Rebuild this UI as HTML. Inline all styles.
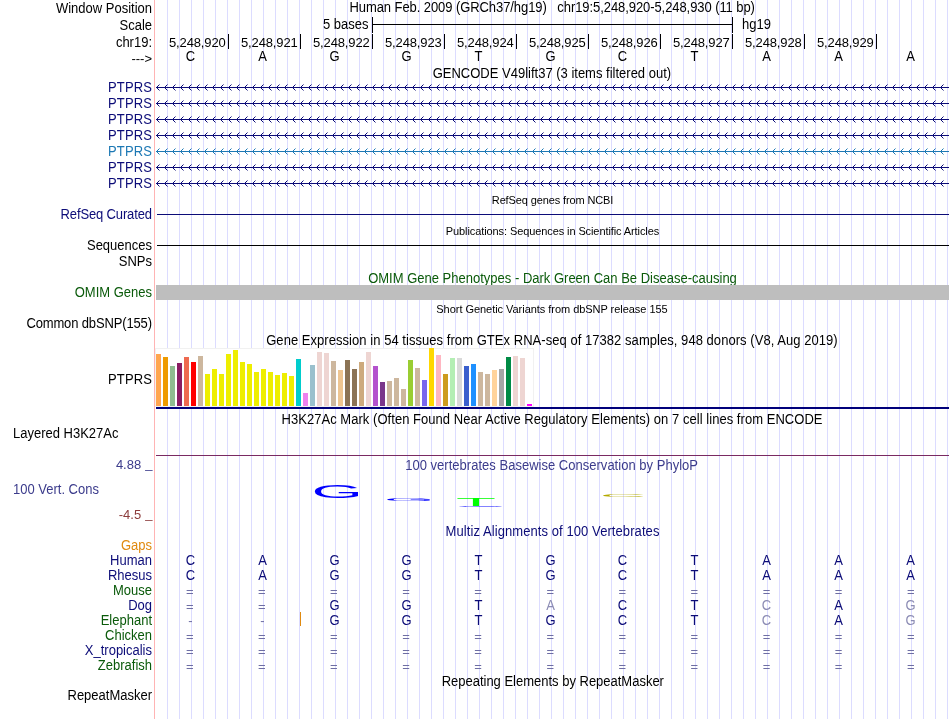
<!DOCTYPE html>
<html lang="en"><head><meta charset="utf-8"><title>UCSC Genome Browser chr19:5,248,920-5,248,930</title>
<style>html,body{margin:0;padding:0;background:#fff;overflow:hidden}svg{display:block;will-change:transform}text{font-family:"Liberation Sans",sans-serif;white-space:pre}</style>
</head><body>
<svg width="950" height="719" viewBox="0 0 950 719">
<rect width="950" height="719" fill="#fff"/>
<g id="guides" fill="#dcdcff">
<rect x="167" y="0" width="1" height="719"/>
<rect x="179" y="0" width="1" height="719"/>
<rect x="191" y="0" width="1" height="719"/>
<rect x="203" y="0" width="1" height="719"/>
<rect x="215" y="0" width="1" height="719"/>
<rect x="227" y="0" width="1" height="719"/>
<rect x="239" y="0" width="1" height="719"/>
<rect x="251" y="0" width="1" height="719"/>
<rect x="263" y="0" width="1" height="719"/>
<rect x="275" y="0" width="1" height="719"/>
<rect x="287" y="0" width="1" height="719"/>
<rect x="299" y="0" width="1" height="719"/>
<rect x="311" y="0" width="1" height="719"/>
<rect x="323" y="0" width="1" height="719"/>
<rect x="335" y="0" width="1" height="719"/>
<rect x="347" y="0" width="1" height="719"/>
<rect x="359" y="0" width="1" height="719"/>
<rect x="371" y="0" width="1" height="719"/>
<rect x="383" y="0" width="1" height="719"/>
<rect x="395" y="0" width="1" height="719"/>
<rect x="407" y="0" width="1" height="719"/>
<rect x="419" y="0" width="1" height="719"/>
<rect x="431" y="0" width="1" height="719"/>
<rect x="443" y="0" width="1" height="719"/>
<rect x="455" y="0" width="1" height="719"/>
<rect x="467" y="0" width="1" height="719"/>
<rect x="479" y="0" width="1" height="719"/>
<rect x="491" y="0" width="1" height="719"/>
<rect x="503" y="0" width="1" height="719"/>
<rect x="515" y="0" width="1" height="719"/>
<rect x="527" y="0" width="1" height="719"/>
<rect x="539" y="0" width="1" height="719"/>
<rect x="551" y="0" width="1" height="719"/>
<rect x="563" y="0" width="1" height="719"/>
<rect x="575" y="0" width="1" height="719"/>
<rect x="587" y="0" width="1" height="719"/>
<rect x="599" y="0" width="1" height="719"/>
<rect x="611" y="0" width="1" height="719"/>
<rect x="623" y="0" width="1" height="719"/>
<rect x="635" y="0" width="1" height="719"/>
<rect x="647" y="0" width="1" height="719"/>
<rect x="659" y="0" width="1" height="719"/>
<rect x="671" y="0" width="1" height="719"/>
<rect x="683" y="0" width="1" height="719"/>
<rect x="695" y="0" width="1" height="719"/>
<rect x="707" y="0" width="1" height="719"/>
<rect x="719" y="0" width="1" height="719"/>
<rect x="731" y="0" width="1" height="719"/>
<rect x="743" y="0" width="1" height="719"/>
<rect x="755" y="0" width="1" height="719"/>
<rect x="767" y="0" width="1" height="719"/>
<rect x="779" y="0" width="1" height="719"/>
<rect x="791" y="0" width="1" height="719"/>
<rect x="803" y="0" width="1" height="719"/>
<rect x="815" y="0" width="1" height="719"/>
<rect x="827" y="0" width="1" height="719"/>
<rect x="839" y="0" width="1" height="719"/>
<rect x="851" y="0" width="1" height="719"/>
<rect x="863" y="0" width="1" height="719"/>
<rect x="875" y="0" width="1" height="719"/>
<rect x="887" y="0" width="1" height="719"/>
<rect x="899" y="0" width="1" height="719"/>
<rect x="911" y="0" width="1" height="719"/>
<rect x="923" y="0" width="1" height="719"/>
<rect x="935" y="0" width="1" height="719"/>
<rect x="947" y="0" width="1" height="719"/>
</g>
<rect x="154" y="0" width="1" height="719" fill="#ffb4b4"/>
<text transform="translate(152 13) scale(0.9346 1)" text-anchor="end" fill="#000" font-size="13.91">Window Position</text>
<text transform="translate(152 30) scale(0.9346 1)" text-anchor="end" fill="#000" font-size="13.91">Scale</text>
<text transform="translate(152 47) scale(0.9346 1)" text-anchor="end" fill="#000" font-size="13.91">chr19:</text>
<text x="152" y="63" text-anchor="end" fill="#000" font-size="13">---&gt;</text>
<text transform="translate(552.2 12) scale(0.9346 1)" text-anchor="middle" fill="#000" font-size="13.91" textLength="433.89" lengthAdjust="spacing">Human Feb. 2009 (GRCh37/hg19)   chr19:5,248,920-5,248,930 (11 bp)</text>
<text transform="translate(368.5 29) scale(0.9346 1)" text-anchor="end" fill="#000" font-size="13.91">5 bases</text>
<text transform="translate(742 29) scale(0.9346 1)" text-anchor="start" fill="#000" font-size="13.91">hg19</text>
<g fill="#000">
<rect x="372" y="24" width="361" height="1"/>
<rect x="372" y="17" width="1" height="16"/>
<rect x="732" y="17" width="1" height="16"/>
</g>
<text x="225.7" y="47" text-anchor="end" fill="#000" font-size="13" textLength="56.7" lengthAdjust="spacing">5,248,920</text>
<rect x="228" y="34" width="1" height="15" fill="#000"/>
<text transform="translate(190.5 61) scale(0.9346 1)" text-anchor="middle" fill="#000" font-size="13.91">C</text>
<text x="297.7" y="47" text-anchor="end" fill="#000" font-size="13" textLength="56.7" lengthAdjust="spacing">5,248,921</text>
<rect x="300" y="34" width="1" height="15" fill="#000"/>
<text transform="translate(262.5 61) scale(0.9346 1)" text-anchor="middle" fill="#000" font-size="13.91">A</text>
<text x="369.7" y="47" text-anchor="end" fill="#000" font-size="13" textLength="56.7" lengthAdjust="spacing">5,248,922</text>
<rect x="372" y="34" width="1" height="15" fill="#000"/>
<text transform="translate(334.5 61) scale(0.9346 1)" text-anchor="middle" fill="#000" font-size="13.91">G</text>
<text x="441.7" y="47" text-anchor="end" fill="#000" font-size="13" textLength="56.7" lengthAdjust="spacing">5,248,923</text>
<rect x="444" y="34" width="1" height="15" fill="#000"/>
<text transform="translate(406.5 61) scale(0.9346 1)" text-anchor="middle" fill="#000" font-size="13.91">G</text>
<text x="513.7" y="47" text-anchor="end" fill="#000" font-size="13" textLength="56.7" lengthAdjust="spacing">5,248,924</text>
<rect x="516" y="34" width="1" height="15" fill="#000"/>
<text transform="translate(478.5 61) scale(0.9346 1)" text-anchor="middle" fill="#000" font-size="13.91">T</text>
<text x="585.7" y="47" text-anchor="end" fill="#000" font-size="13" textLength="56.7" lengthAdjust="spacing">5,248,925</text>
<rect x="588" y="34" width="1" height="15" fill="#000"/>
<text transform="translate(550.5 61) scale(0.9346 1)" text-anchor="middle" fill="#000" font-size="13.91">G</text>
<text x="657.7" y="47" text-anchor="end" fill="#000" font-size="13" textLength="56.7" lengthAdjust="spacing">5,248,926</text>
<rect x="660" y="34" width="1" height="15" fill="#000"/>
<text transform="translate(622.5 61) scale(0.9346 1)" text-anchor="middle" fill="#000" font-size="13.91">C</text>
<text x="729.7" y="47" text-anchor="end" fill="#000" font-size="13" textLength="56.7" lengthAdjust="spacing">5,248,927</text>
<rect x="732" y="34" width="1" height="15" fill="#000"/>
<text transform="translate(694.5 61) scale(0.9346 1)" text-anchor="middle" fill="#000" font-size="13.91">T</text>
<text x="801.7" y="47" text-anchor="end" fill="#000" font-size="13" textLength="56.7" lengthAdjust="spacing">5,248,928</text>
<rect x="804" y="34" width="1" height="15" fill="#000"/>
<text transform="translate(766.5 61) scale(0.9346 1)" text-anchor="middle" fill="#000" font-size="13.91">A</text>
<text x="873.7" y="47" text-anchor="end" fill="#000" font-size="13" textLength="56.7" lengthAdjust="spacing">5,248,929</text>
<rect x="876" y="34" width="1" height="15" fill="#000"/>
<text transform="translate(838.5 61) scale(0.9346 1)" text-anchor="middle" fill="#000" font-size="13.91">A</text>
<text transform="translate(910.5 61) scale(0.9346 1)" text-anchor="middle" fill="#000" font-size="13.91">A</text>
<text transform="translate(551.9 78) scale(0.9346 1)" text-anchor="middle" fill="#000" font-size="13.91" textLength="255.09" lengthAdjust="spacing">GENCODE V49lift37 (3 items filtered out)</text>
<text transform="translate(152 92) scale(0.9346 1)" text-anchor="end" fill="#0c0c78" font-size="13.91" textLength="47.19" lengthAdjust="spacing">PTPRS</text>
<g stroke="#0c0c78" fill="none" stroke-width="1">
<path d="M156 87.5H949"/>
<path d="M159.5 84.5L156.5 87.5L159.5 90.5M167.5 84.5L164.5 87.5L167.5 90.5M175.5 84.5L172.5 87.5L175.5 90.5M183.5 84.5L180.5 87.5L183.5 90.5M191.5 84.5L188.5 87.5L191.5 90.5M199.5 84.5L196.5 87.5L199.5 90.5M207.5 84.5L204.5 87.5L207.5 90.5M215.5 84.5L212.5 87.5L215.5 90.5M223.5 84.5L220.5 87.5L223.5 90.5M231.5 84.5L228.5 87.5L231.5 90.5M239.5 84.5L236.5 87.5L239.5 90.5M247.5 84.5L244.5 87.5L247.5 90.5M255.5 84.5L252.5 87.5L255.5 90.5M263.5 84.5L260.5 87.5L263.5 90.5M271.5 84.5L268.5 87.5L271.5 90.5M279.5 84.5L276.5 87.5L279.5 90.5M287.5 84.5L284.5 87.5L287.5 90.5M295.5 84.5L292.5 87.5L295.5 90.5M303.5 84.5L300.5 87.5L303.5 90.5M311.5 84.5L308.5 87.5L311.5 90.5M319.5 84.5L316.5 87.5L319.5 90.5M327.5 84.5L324.5 87.5L327.5 90.5M335.5 84.5L332.5 87.5L335.5 90.5M343.5 84.5L340.5 87.5L343.5 90.5M351.5 84.5L348.5 87.5L351.5 90.5M359.5 84.5L356.5 87.5L359.5 90.5M367.5 84.5L364.5 87.5L367.5 90.5M375.5 84.5L372.5 87.5L375.5 90.5M383.5 84.5L380.5 87.5L383.5 90.5M391.5 84.5L388.5 87.5L391.5 90.5M399.5 84.5L396.5 87.5L399.5 90.5M407.5 84.5L404.5 87.5L407.5 90.5M415.5 84.5L412.5 87.5L415.5 90.5M423.5 84.5L420.5 87.5L423.5 90.5M431.5 84.5L428.5 87.5L431.5 90.5M439.5 84.5L436.5 87.5L439.5 90.5M447.5 84.5L444.5 87.5L447.5 90.5M455.5 84.5L452.5 87.5L455.5 90.5M463.5 84.5L460.5 87.5L463.5 90.5M471.5 84.5L468.5 87.5L471.5 90.5M479.5 84.5L476.5 87.5L479.5 90.5M487.5 84.5L484.5 87.5L487.5 90.5M495.5 84.5L492.5 87.5L495.5 90.5M503.5 84.5L500.5 87.5L503.5 90.5M511.5 84.5L508.5 87.5L511.5 90.5M519.5 84.5L516.5 87.5L519.5 90.5M527.5 84.5L524.5 87.5L527.5 90.5M535.5 84.5L532.5 87.5L535.5 90.5M543.5 84.5L540.5 87.5L543.5 90.5M551.5 84.5L548.5 87.5L551.5 90.5M559.5 84.5L556.5 87.5L559.5 90.5M567.5 84.5L564.5 87.5L567.5 90.5M575.5 84.5L572.5 87.5L575.5 90.5M583.5 84.5L580.5 87.5L583.5 90.5M591.5 84.5L588.5 87.5L591.5 90.5M599.5 84.5L596.5 87.5L599.5 90.5M607.5 84.5L604.5 87.5L607.5 90.5M615.5 84.5L612.5 87.5L615.5 90.5M623.5 84.5L620.5 87.5L623.5 90.5M631.5 84.5L628.5 87.5L631.5 90.5M639.5 84.5L636.5 87.5L639.5 90.5M647.5 84.5L644.5 87.5L647.5 90.5M655.5 84.5L652.5 87.5L655.5 90.5M663.5 84.5L660.5 87.5L663.5 90.5M671.5 84.5L668.5 87.5L671.5 90.5M679.5 84.5L676.5 87.5L679.5 90.5M687.5 84.5L684.5 87.5L687.5 90.5M695.5 84.5L692.5 87.5L695.5 90.5M703.5 84.5L700.5 87.5L703.5 90.5M711.5 84.5L708.5 87.5L711.5 90.5M719.5 84.5L716.5 87.5L719.5 90.5M727.5 84.5L724.5 87.5L727.5 90.5M735.5 84.5L732.5 87.5L735.5 90.5M743.5 84.5L740.5 87.5L743.5 90.5M751.5 84.5L748.5 87.5L751.5 90.5M759.5 84.5L756.5 87.5L759.5 90.5M767.5 84.5L764.5 87.5L767.5 90.5M775.5 84.5L772.5 87.5L775.5 90.5M783.5 84.5L780.5 87.5L783.5 90.5M791.5 84.5L788.5 87.5L791.5 90.5M799.5 84.5L796.5 87.5L799.5 90.5M807.5 84.5L804.5 87.5L807.5 90.5M815.5 84.5L812.5 87.5L815.5 90.5M823.5 84.5L820.5 87.5L823.5 90.5M831.5 84.5L828.5 87.5L831.5 90.5M839.5 84.5L836.5 87.5L839.5 90.5M847.5 84.5L844.5 87.5L847.5 90.5M855.5 84.5L852.5 87.5L855.5 90.5M863.5 84.5L860.5 87.5L863.5 90.5M871.5 84.5L868.5 87.5L871.5 90.5M879.5 84.5L876.5 87.5L879.5 90.5M887.5 84.5L884.5 87.5L887.5 90.5M895.5 84.5L892.5 87.5L895.5 90.5M903.5 84.5L900.5 87.5L903.5 90.5M911.5 84.5L908.5 87.5L911.5 90.5M919.5 84.5L916.5 87.5L919.5 90.5M927.5 84.5L924.5 87.5L927.5 90.5M935.5 84.5L932.5 87.5L935.5 90.5M943.5 84.5L940.5 87.5L943.5 90.5"/>
</g>
<text transform="translate(152 108) scale(0.9346 1)" text-anchor="end" fill="#0c0c78" font-size="13.91" textLength="47.19" lengthAdjust="spacing">PTPRS</text>
<g stroke="#0c0c78" fill="none" stroke-width="1">
<path d="M156 103.5H949"/>
<path d="M159.5 100.5L156.5 103.5L159.5 106.5M167.5 100.5L164.5 103.5L167.5 106.5M175.5 100.5L172.5 103.5L175.5 106.5M183.5 100.5L180.5 103.5L183.5 106.5M191.5 100.5L188.5 103.5L191.5 106.5M199.5 100.5L196.5 103.5L199.5 106.5M207.5 100.5L204.5 103.5L207.5 106.5M215.5 100.5L212.5 103.5L215.5 106.5M223.5 100.5L220.5 103.5L223.5 106.5M231.5 100.5L228.5 103.5L231.5 106.5M239.5 100.5L236.5 103.5L239.5 106.5M247.5 100.5L244.5 103.5L247.5 106.5M255.5 100.5L252.5 103.5L255.5 106.5M263.5 100.5L260.5 103.5L263.5 106.5M271.5 100.5L268.5 103.5L271.5 106.5M279.5 100.5L276.5 103.5L279.5 106.5M287.5 100.5L284.5 103.5L287.5 106.5M295.5 100.5L292.5 103.5L295.5 106.5M303.5 100.5L300.5 103.5L303.5 106.5M311.5 100.5L308.5 103.5L311.5 106.5M319.5 100.5L316.5 103.5L319.5 106.5M327.5 100.5L324.5 103.5L327.5 106.5M335.5 100.5L332.5 103.5L335.5 106.5M343.5 100.5L340.5 103.5L343.5 106.5M351.5 100.5L348.5 103.5L351.5 106.5M359.5 100.5L356.5 103.5L359.5 106.5M367.5 100.5L364.5 103.5L367.5 106.5M375.5 100.5L372.5 103.5L375.5 106.5M383.5 100.5L380.5 103.5L383.5 106.5M391.5 100.5L388.5 103.5L391.5 106.5M399.5 100.5L396.5 103.5L399.5 106.5M407.5 100.5L404.5 103.5L407.5 106.5M415.5 100.5L412.5 103.5L415.5 106.5M423.5 100.5L420.5 103.5L423.5 106.5M431.5 100.5L428.5 103.5L431.5 106.5M439.5 100.5L436.5 103.5L439.5 106.5M447.5 100.5L444.5 103.5L447.5 106.5M455.5 100.5L452.5 103.5L455.5 106.5M463.5 100.5L460.5 103.5L463.5 106.5M471.5 100.5L468.5 103.5L471.5 106.5M479.5 100.5L476.5 103.5L479.5 106.5M487.5 100.5L484.5 103.5L487.5 106.5M495.5 100.5L492.5 103.5L495.5 106.5M503.5 100.5L500.5 103.5L503.5 106.5M511.5 100.5L508.5 103.5L511.5 106.5M519.5 100.5L516.5 103.5L519.5 106.5M527.5 100.5L524.5 103.5L527.5 106.5M535.5 100.5L532.5 103.5L535.5 106.5M543.5 100.5L540.5 103.5L543.5 106.5M551.5 100.5L548.5 103.5L551.5 106.5M559.5 100.5L556.5 103.5L559.5 106.5M567.5 100.5L564.5 103.5L567.5 106.5M575.5 100.5L572.5 103.5L575.5 106.5M583.5 100.5L580.5 103.5L583.5 106.5M591.5 100.5L588.5 103.5L591.5 106.5M599.5 100.5L596.5 103.5L599.5 106.5M607.5 100.5L604.5 103.5L607.5 106.5M615.5 100.5L612.5 103.5L615.5 106.5M623.5 100.5L620.5 103.5L623.5 106.5M631.5 100.5L628.5 103.5L631.5 106.5M639.5 100.5L636.5 103.5L639.5 106.5M647.5 100.5L644.5 103.5L647.5 106.5M655.5 100.5L652.5 103.5L655.5 106.5M663.5 100.5L660.5 103.5L663.5 106.5M671.5 100.5L668.5 103.5L671.5 106.5M679.5 100.5L676.5 103.5L679.5 106.5M687.5 100.5L684.5 103.5L687.5 106.5M695.5 100.5L692.5 103.5L695.5 106.5M703.5 100.5L700.5 103.5L703.5 106.5M711.5 100.5L708.5 103.5L711.5 106.5M719.5 100.5L716.5 103.5L719.5 106.5M727.5 100.5L724.5 103.5L727.5 106.5M735.5 100.5L732.5 103.5L735.5 106.5M743.5 100.5L740.5 103.5L743.5 106.5M751.5 100.5L748.5 103.5L751.5 106.5M759.5 100.5L756.5 103.5L759.5 106.5M767.5 100.5L764.5 103.5L767.5 106.5M775.5 100.5L772.5 103.5L775.5 106.5M783.5 100.5L780.5 103.5L783.5 106.5M791.5 100.5L788.5 103.5L791.5 106.5M799.5 100.5L796.5 103.5L799.5 106.5M807.5 100.5L804.5 103.5L807.5 106.5M815.5 100.5L812.5 103.5L815.5 106.5M823.5 100.5L820.5 103.5L823.5 106.5M831.5 100.5L828.5 103.5L831.5 106.5M839.5 100.5L836.5 103.5L839.5 106.5M847.5 100.5L844.5 103.5L847.5 106.5M855.5 100.5L852.5 103.5L855.5 106.5M863.5 100.5L860.5 103.5L863.5 106.5M871.5 100.5L868.5 103.5L871.5 106.5M879.5 100.5L876.5 103.5L879.5 106.5M887.5 100.5L884.5 103.5L887.5 106.5M895.5 100.5L892.5 103.5L895.5 106.5M903.5 100.5L900.5 103.5L903.5 106.5M911.5 100.5L908.5 103.5L911.5 106.5M919.5 100.5L916.5 103.5L919.5 106.5M927.5 100.5L924.5 103.5L927.5 106.5M935.5 100.5L932.5 103.5L935.5 106.5M943.5 100.5L940.5 103.5L943.5 106.5"/>
</g>
<text transform="translate(152 124) scale(0.9346 1)" text-anchor="end" fill="#0c0c78" font-size="13.91" textLength="47.19" lengthAdjust="spacing">PTPRS</text>
<g stroke="#0c0c78" fill="none" stroke-width="1">
<path d="M156 119.5H949"/>
<path d="M159.5 116.5L156.5 119.5L159.5 122.5M167.5 116.5L164.5 119.5L167.5 122.5M175.5 116.5L172.5 119.5L175.5 122.5M183.5 116.5L180.5 119.5L183.5 122.5M191.5 116.5L188.5 119.5L191.5 122.5M199.5 116.5L196.5 119.5L199.5 122.5M207.5 116.5L204.5 119.5L207.5 122.5M215.5 116.5L212.5 119.5L215.5 122.5M223.5 116.5L220.5 119.5L223.5 122.5M231.5 116.5L228.5 119.5L231.5 122.5M239.5 116.5L236.5 119.5L239.5 122.5M247.5 116.5L244.5 119.5L247.5 122.5M255.5 116.5L252.5 119.5L255.5 122.5M263.5 116.5L260.5 119.5L263.5 122.5M271.5 116.5L268.5 119.5L271.5 122.5M279.5 116.5L276.5 119.5L279.5 122.5M287.5 116.5L284.5 119.5L287.5 122.5M295.5 116.5L292.5 119.5L295.5 122.5M303.5 116.5L300.5 119.5L303.5 122.5M311.5 116.5L308.5 119.5L311.5 122.5M319.5 116.5L316.5 119.5L319.5 122.5M327.5 116.5L324.5 119.5L327.5 122.5M335.5 116.5L332.5 119.5L335.5 122.5M343.5 116.5L340.5 119.5L343.5 122.5M351.5 116.5L348.5 119.5L351.5 122.5M359.5 116.5L356.5 119.5L359.5 122.5M367.5 116.5L364.5 119.5L367.5 122.5M375.5 116.5L372.5 119.5L375.5 122.5M383.5 116.5L380.5 119.5L383.5 122.5M391.5 116.5L388.5 119.5L391.5 122.5M399.5 116.5L396.5 119.5L399.5 122.5M407.5 116.5L404.5 119.5L407.5 122.5M415.5 116.5L412.5 119.5L415.5 122.5M423.5 116.5L420.5 119.5L423.5 122.5M431.5 116.5L428.5 119.5L431.5 122.5M439.5 116.5L436.5 119.5L439.5 122.5M447.5 116.5L444.5 119.5L447.5 122.5M455.5 116.5L452.5 119.5L455.5 122.5M463.5 116.5L460.5 119.5L463.5 122.5M471.5 116.5L468.5 119.5L471.5 122.5M479.5 116.5L476.5 119.5L479.5 122.5M487.5 116.5L484.5 119.5L487.5 122.5M495.5 116.5L492.5 119.5L495.5 122.5M503.5 116.5L500.5 119.5L503.5 122.5M511.5 116.5L508.5 119.5L511.5 122.5M519.5 116.5L516.5 119.5L519.5 122.5M527.5 116.5L524.5 119.5L527.5 122.5M535.5 116.5L532.5 119.5L535.5 122.5M543.5 116.5L540.5 119.5L543.5 122.5M551.5 116.5L548.5 119.5L551.5 122.5M559.5 116.5L556.5 119.5L559.5 122.5M567.5 116.5L564.5 119.5L567.5 122.5M575.5 116.5L572.5 119.5L575.5 122.5M583.5 116.5L580.5 119.5L583.5 122.5M591.5 116.5L588.5 119.5L591.5 122.5M599.5 116.5L596.5 119.5L599.5 122.5M607.5 116.5L604.5 119.5L607.5 122.5M615.5 116.5L612.5 119.5L615.5 122.5M623.5 116.5L620.5 119.5L623.5 122.5M631.5 116.5L628.5 119.5L631.5 122.5M639.5 116.5L636.5 119.5L639.5 122.5M647.5 116.5L644.5 119.5L647.5 122.5M655.5 116.5L652.5 119.5L655.5 122.5M663.5 116.5L660.5 119.5L663.5 122.5M671.5 116.5L668.5 119.5L671.5 122.5M679.5 116.5L676.5 119.5L679.5 122.5M687.5 116.5L684.5 119.5L687.5 122.5M695.5 116.5L692.5 119.5L695.5 122.5M703.5 116.5L700.5 119.5L703.5 122.5M711.5 116.5L708.5 119.5L711.5 122.5M719.5 116.5L716.5 119.5L719.5 122.5M727.5 116.5L724.5 119.5L727.5 122.5M735.5 116.5L732.5 119.5L735.5 122.5M743.5 116.5L740.5 119.5L743.5 122.5M751.5 116.5L748.5 119.5L751.5 122.5M759.5 116.5L756.5 119.5L759.5 122.5M767.5 116.5L764.5 119.5L767.5 122.5M775.5 116.5L772.5 119.5L775.5 122.5M783.5 116.5L780.5 119.5L783.5 122.5M791.5 116.5L788.5 119.5L791.5 122.5M799.5 116.5L796.5 119.5L799.5 122.5M807.5 116.5L804.5 119.5L807.5 122.5M815.5 116.5L812.5 119.5L815.5 122.5M823.5 116.5L820.5 119.5L823.5 122.5M831.5 116.5L828.5 119.5L831.5 122.5M839.5 116.5L836.5 119.5L839.5 122.5M847.5 116.5L844.5 119.5L847.5 122.5M855.5 116.5L852.5 119.5L855.5 122.5M863.5 116.5L860.5 119.5L863.5 122.5M871.5 116.5L868.5 119.5L871.5 122.5M879.5 116.5L876.5 119.5L879.5 122.5M887.5 116.5L884.5 119.5L887.5 122.5M895.5 116.5L892.5 119.5L895.5 122.5M903.5 116.5L900.5 119.5L903.5 122.5M911.5 116.5L908.5 119.5L911.5 122.5M919.5 116.5L916.5 119.5L919.5 122.5M927.5 116.5L924.5 119.5L927.5 122.5M935.5 116.5L932.5 119.5L935.5 122.5M943.5 116.5L940.5 119.5L943.5 122.5"/>
</g>
<text transform="translate(152 140) scale(0.9346 1)" text-anchor="end" fill="#0c0c78" font-size="13.91" textLength="47.19" lengthAdjust="spacing">PTPRS</text>
<g stroke="#0c0c78" fill="none" stroke-width="1">
<path d="M156 135.5H949"/>
<path d="M159.5 132.5L156.5 135.5L159.5 138.5M167.5 132.5L164.5 135.5L167.5 138.5M175.5 132.5L172.5 135.5L175.5 138.5M183.5 132.5L180.5 135.5L183.5 138.5M191.5 132.5L188.5 135.5L191.5 138.5M199.5 132.5L196.5 135.5L199.5 138.5M207.5 132.5L204.5 135.5L207.5 138.5M215.5 132.5L212.5 135.5L215.5 138.5M223.5 132.5L220.5 135.5L223.5 138.5M231.5 132.5L228.5 135.5L231.5 138.5M239.5 132.5L236.5 135.5L239.5 138.5M247.5 132.5L244.5 135.5L247.5 138.5M255.5 132.5L252.5 135.5L255.5 138.5M263.5 132.5L260.5 135.5L263.5 138.5M271.5 132.5L268.5 135.5L271.5 138.5M279.5 132.5L276.5 135.5L279.5 138.5M287.5 132.5L284.5 135.5L287.5 138.5M295.5 132.5L292.5 135.5L295.5 138.5M303.5 132.5L300.5 135.5L303.5 138.5M311.5 132.5L308.5 135.5L311.5 138.5M319.5 132.5L316.5 135.5L319.5 138.5M327.5 132.5L324.5 135.5L327.5 138.5M335.5 132.5L332.5 135.5L335.5 138.5M343.5 132.5L340.5 135.5L343.5 138.5M351.5 132.5L348.5 135.5L351.5 138.5M359.5 132.5L356.5 135.5L359.5 138.5M367.5 132.5L364.5 135.5L367.5 138.5M375.5 132.5L372.5 135.5L375.5 138.5M383.5 132.5L380.5 135.5L383.5 138.5M391.5 132.5L388.5 135.5L391.5 138.5M399.5 132.5L396.5 135.5L399.5 138.5M407.5 132.5L404.5 135.5L407.5 138.5M415.5 132.5L412.5 135.5L415.5 138.5M423.5 132.5L420.5 135.5L423.5 138.5M431.5 132.5L428.5 135.5L431.5 138.5M439.5 132.5L436.5 135.5L439.5 138.5M447.5 132.5L444.5 135.5L447.5 138.5M455.5 132.5L452.5 135.5L455.5 138.5M463.5 132.5L460.5 135.5L463.5 138.5M471.5 132.5L468.5 135.5L471.5 138.5M479.5 132.5L476.5 135.5L479.5 138.5M487.5 132.5L484.5 135.5L487.5 138.5M495.5 132.5L492.5 135.5L495.5 138.5M503.5 132.5L500.5 135.5L503.5 138.5M511.5 132.5L508.5 135.5L511.5 138.5M519.5 132.5L516.5 135.5L519.5 138.5M527.5 132.5L524.5 135.5L527.5 138.5M535.5 132.5L532.5 135.5L535.5 138.5M543.5 132.5L540.5 135.5L543.5 138.5M551.5 132.5L548.5 135.5L551.5 138.5M559.5 132.5L556.5 135.5L559.5 138.5M567.5 132.5L564.5 135.5L567.5 138.5M575.5 132.5L572.5 135.5L575.5 138.5M583.5 132.5L580.5 135.5L583.5 138.5M591.5 132.5L588.5 135.5L591.5 138.5M599.5 132.5L596.5 135.5L599.5 138.5M607.5 132.5L604.5 135.5L607.5 138.5M615.5 132.5L612.5 135.5L615.5 138.5M623.5 132.5L620.5 135.5L623.5 138.5M631.5 132.5L628.5 135.5L631.5 138.5M639.5 132.5L636.5 135.5L639.5 138.5M647.5 132.5L644.5 135.5L647.5 138.5M655.5 132.5L652.5 135.5L655.5 138.5M663.5 132.5L660.5 135.5L663.5 138.5M671.5 132.5L668.5 135.5L671.5 138.5M679.5 132.5L676.5 135.5L679.5 138.5M687.5 132.5L684.5 135.5L687.5 138.5M695.5 132.5L692.5 135.5L695.5 138.5M703.5 132.5L700.5 135.5L703.5 138.5M711.5 132.5L708.5 135.5L711.5 138.5M719.5 132.5L716.5 135.5L719.5 138.5M727.5 132.5L724.5 135.5L727.5 138.5M735.5 132.5L732.5 135.5L735.5 138.5M743.5 132.5L740.5 135.5L743.5 138.5M751.5 132.5L748.5 135.5L751.5 138.5M759.5 132.5L756.5 135.5L759.5 138.5M767.5 132.5L764.5 135.5L767.5 138.5M775.5 132.5L772.5 135.5L775.5 138.5M783.5 132.5L780.5 135.5L783.5 138.5M791.5 132.5L788.5 135.5L791.5 138.5M799.5 132.5L796.5 135.5L799.5 138.5M807.5 132.5L804.5 135.5L807.5 138.5M815.5 132.5L812.5 135.5L815.5 138.5M823.5 132.5L820.5 135.5L823.5 138.5M831.5 132.5L828.5 135.5L831.5 138.5M839.5 132.5L836.5 135.5L839.5 138.5M847.5 132.5L844.5 135.5L847.5 138.5M855.5 132.5L852.5 135.5L855.5 138.5M863.5 132.5L860.5 135.5L863.5 138.5M871.5 132.5L868.5 135.5L871.5 138.5M879.5 132.5L876.5 135.5L879.5 138.5M887.5 132.5L884.5 135.5L887.5 138.5M895.5 132.5L892.5 135.5L895.5 138.5M903.5 132.5L900.5 135.5L903.5 138.5M911.5 132.5L908.5 135.5L911.5 138.5M919.5 132.5L916.5 135.5L919.5 138.5M927.5 132.5L924.5 135.5L927.5 138.5M935.5 132.5L932.5 135.5L935.5 138.5M943.5 132.5L940.5 135.5L943.5 138.5"/>
</g>
<text transform="translate(152 156) scale(0.9346 1)" text-anchor="end" fill="#1c78b4" font-size="13.91" textLength="47.19" lengthAdjust="spacing">PTPRS</text>
<g stroke="#1c78b4" fill="none" stroke-width="1">
<path d="M156 151.5H949"/>
<path d="M159.5 148.5L156.5 151.5L159.5 154.5M167.5 148.5L164.5 151.5L167.5 154.5M175.5 148.5L172.5 151.5L175.5 154.5M183.5 148.5L180.5 151.5L183.5 154.5M191.5 148.5L188.5 151.5L191.5 154.5M199.5 148.5L196.5 151.5L199.5 154.5M207.5 148.5L204.5 151.5L207.5 154.5M215.5 148.5L212.5 151.5L215.5 154.5M223.5 148.5L220.5 151.5L223.5 154.5M231.5 148.5L228.5 151.5L231.5 154.5M239.5 148.5L236.5 151.5L239.5 154.5M247.5 148.5L244.5 151.5L247.5 154.5M255.5 148.5L252.5 151.5L255.5 154.5M263.5 148.5L260.5 151.5L263.5 154.5M271.5 148.5L268.5 151.5L271.5 154.5M279.5 148.5L276.5 151.5L279.5 154.5M287.5 148.5L284.5 151.5L287.5 154.5M295.5 148.5L292.5 151.5L295.5 154.5M303.5 148.5L300.5 151.5L303.5 154.5M311.5 148.5L308.5 151.5L311.5 154.5M319.5 148.5L316.5 151.5L319.5 154.5M327.5 148.5L324.5 151.5L327.5 154.5M335.5 148.5L332.5 151.5L335.5 154.5M343.5 148.5L340.5 151.5L343.5 154.5M351.5 148.5L348.5 151.5L351.5 154.5M359.5 148.5L356.5 151.5L359.5 154.5M367.5 148.5L364.5 151.5L367.5 154.5M375.5 148.5L372.5 151.5L375.5 154.5M383.5 148.5L380.5 151.5L383.5 154.5M391.5 148.5L388.5 151.5L391.5 154.5M399.5 148.5L396.5 151.5L399.5 154.5M407.5 148.5L404.5 151.5L407.5 154.5M415.5 148.5L412.5 151.5L415.5 154.5M423.5 148.5L420.5 151.5L423.5 154.5M431.5 148.5L428.5 151.5L431.5 154.5M439.5 148.5L436.5 151.5L439.5 154.5M447.5 148.5L444.5 151.5L447.5 154.5M455.5 148.5L452.5 151.5L455.5 154.5M463.5 148.5L460.5 151.5L463.5 154.5M471.5 148.5L468.5 151.5L471.5 154.5M479.5 148.5L476.5 151.5L479.5 154.5M487.5 148.5L484.5 151.5L487.5 154.5M495.5 148.5L492.5 151.5L495.5 154.5M503.5 148.5L500.5 151.5L503.5 154.5M511.5 148.5L508.5 151.5L511.5 154.5M519.5 148.5L516.5 151.5L519.5 154.5M527.5 148.5L524.5 151.5L527.5 154.5M535.5 148.5L532.5 151.5L535.5 154.5M543.5 148.5L540.5 151.5L543.5 154.5M551.5 148.5L548.5 151.5L551.5 154.5M559.5 148.5L556.5 151.5L559.5 154.5M567.5 148.5L564.5 151.5L567.5 154.5M575.5 148.5L572.5 151.5L575.5 154.5M583.5 148.5L580.5 151.5L583.5 154.5M591.5 148.5L588.5 151.5L591.5 154.5M599.5 148.5L596.5 151.5L599.5 154.5M607.5 148.5L604.5 151.5L607.5 154.5M615.5 148.5L612.5 151.5L615.5 154.5M623.5 148.5L620.5 151.5L623.5 154.5M631.5 148.5L628.5 151.5L631.5 154.5M639.5 148.5L636.5 151.5L639.5 154.5M647.5 148.5L644.5 151.5L647.5 154.5M655.5 148.5L652.5 151.5L655.5 154.5M663.5 148.5L660.5 151.5L663.5 154.5M671.5 148.5L668.5 151.5L671.5 154.5M679.5 148.5L676.5 151.5L679.5 154.5M687.5 148.5L684.5 151.5L687.5 154.5M695.5 148.5L692.5 151.5L695.5 154.5M703.5 148.5L700.5 151.5L703.5 154.5M711.5 148.5L708.5 151.5L711.5 154.5M719.5 148.5L716.5 151.5L719.5 154.5M727.5 148.5L724.5 151.5L727.5 154.5M735.5 148.5L732.5 151.5L735.5 154.5M743.5 148.5L740.5 151.5L743.5 154.5M751.5 148.5L748.5 151.5L751.5 154.5M759.5 148.5L756.5 151.5L759.5 154.5M767.5 148.5L764.5 151.5L767.5 154.5M775.5 148.5L772.5 151.5L775.5 154.5M783.5 148.5L780.5 151.5L783.5 154.5M791.5 148.5L788.5 151.5L791.5 154.5M799.5 148.5L796.5 151.5L799.5 154.5M807.5 148.5L804.5 151.5L807.5 154.5M815.5 148.5L812.5 151.5L815.5 154.5M823.5 148.5L820.5 151.5L823.5 154.5M831.5 148.5L828.5 151.5L831.5 154.5M839.5 148.5L836.5 151.5L839.5 154.5M847.5 148.5L844.5 151.5L847.5 154.5M855.5 148.5L852.5 151.5L855.5 154.5M863.5 148.5L860.5 151.5L863.5 154.5M871.5 148.5L868.5 151.5L871.5 154.5M879.5 148.5L876.5 151.5L879.5 154.5M887.5 148.5L884.5 151.5L887.5 154.5M895.5 148.5L892.5 151.5L895.5 154.5M903.5 148.5L900.5 151.5L903.5 154.5M911.5 148.5L908.5 151.5L911.5 154.5M919.5 148.5L916.5 151.5L919.5 154.5M927.5 148.5L924.5 151.5L927.5 154.5M935.5 148.5L932.5 151.5L935.5 154.5M943.5 148.5L940.5 151.5L943.5 154.5"/>
</g>
<text transform="translate(152 172) scale(0.9346 1)" text-anchor="end" fill="#0c0c78" font-size="13.91" textLength="47.19" lengthAdjust="spacing">PTPRS</text>
<g stroke="#0c0c78" fill="none" stroke-width="1">
<path d="M156 167.5H949"/>
<path d="M159.5 164.5L156.5 167.5L159.5 170.5M167.5 164.5L164.5 167.5L167.5 170.5M175.5 164.5L172.5 167.5L175.5 170.5M183.5 164.5L180.5 167.5L183.5 170.5M191.5 164.5L188.5 167.5L191.5 170.5M199.5 164.5L196.5 167.5L199.5 170.5M207.5 164.5L204.5 167.5L207.5 170.5M215.5 164.5L212.5 167.5L215.5 170.5M223.5 164.5L220.5 167.5L223.5 170.5M231.5 164.5L228.5 167.5L231.5 170.5M239.5 164.5L236.5 167.5L239.5 170.5M247.5 164.5L244.5 167.5L247.5 170.5M255.5 164.5L252.5 167.5L255.5 170.5M263.5 164.5L260.5 167.5L263.5 170.5M271.5 164.5L268.5 167.5L271.5 170.5M279.5 164.5L276.5 167.5L279.5 170.5M287.5 164.5L284.5 167.5L287.5 170.5M295.5 164.5L292.5 167.5L295.5 170.5M303.5 164.5L300.5 167.5L303.5 170.5M311.5 164.5L308.5 167.5L311.5 170.5M319.5 164.5L316.5 167.5L319.5 170.5M327.5 164.5L324.5 167.5L327.5 170.5M335.5 164.5L332.5 167.5L335.5 170.5M343.5 164.5L340.5 167.5L343.5 170.5M351.5 164.5L348.5 167.5L351.5 170.5M359.5 164.5L356.5 167.5L359.5 170.5M367.5 164.5L364.5 167.5L367.5 170.5M375.5 164.5L372.5 167.5L375.5 170.5M383.5 164.5L380.5 167.5L383.5 170.5M391.5 164.5L388.5 167.5L391.5 170.5M399.5 164.5L396.5 167.5L399.5 170.5M407.5 164.5L404.5 167.5L407.5 170.5M415.5 164.5L412.5 167.5L415.5 170.5M423.5 164.5L420.5 167.5L423.5 170.5M431.5 164.5L428.5 167.5L431.5 170.5M439.5 164.5L436.5 167.5L439.5 170.5M447.5 164.5L444.5 167.5L447.5 170.5M455.5 164.5L452.5 167.5L455.5 170.5M463.5 164.5L460.5 167.5L463.5 170.5M471.5 164.5L468.5 167.5L471.5 170.5M479.5 164.5L476.5 167.5L479.5 170.5M487.5 164.5L484.5 167.5L487.5 170.5M495.5 164.5L492.5 167.5L495.5 170.5M503.5 164.5L500.5 167.5L503.5 170.5M511.5 164.5L508.5 167.5L511.5 170.5M519.5 164.5L516.5 167.5L519.5 170.5M527.5 164.5L524.5 167.5L527.5 170.5M535.5 164.5L532.5 167.5L535.5 170.5M543.5 164.5L540.5 167.5L543.5 170.5M551.5 164.5L548.5 167.5L551.5 170.5M559.5 164.5L556.5 167.5L559.5 170.5M567.5 164.5L564.5 167.5L567.5 170.5M575.5 164.5L572.5 167.5L575.5 170.5M583.5 164.5L580.5 167.5L583.5 170.5M591.5 164.5L588.5 167.5L591.5 170.5M599.5 164.5L596.5 167.5L599.5 170.5M607.5 164.5L604.5 167.5L607.5 170.5M615.5 164.5L612.5 167.5L615.5 170.5M623.5 164.5L620.5 167.5L623.5 170.5M631.5 164.5L628.5 167.5L631.5 170.5M639.5 164.5L636.5 167.5L639.5 170.5M647.5 164.5L644.5 167.5L647.5 170.5M655.5 164.5L652.5 167.5L655.5 170.5M663.5 164.5L660.5 167.5L663.5 170.5M671.5 164.5L668.5 167.5L671.5 170.5M679.5 164.5L676.5 167.5L679.5 170.5M687.5 164.5L684.5 167.5L687.5 170.5M695.5 164.5L692.5 167.5L695.5 170.5M703.5 164.5L700.5 167.5L703.5 170.5M711.5 164.5L708.5 167.5L711.5 170.5M719.5 164.5L716.5 167.5L719.5 170.5M727.5 164.5L724.5 167.5L727.5 170.5M735.5 164.5L732.5 167.5L735.5 170.5M743.5 164.5L740.5 167.5L743.5 170.5M751.5 164.5L748.5 167.5L751.5 170.5M759.5 164.5L756.5 167.5L759.5 170.5M767.5 164.5L764.5 167.5L767.5 170.5M775.5 164.5L772.5 167.5L775.5 170.5M783.5 164.5L780.5 167.5L783.5 170.5M791.5 164.5L788.5 167.5L791.5 170.5M799.5 164.5L796.5 167.5L799.5 170.5M807.5 164.5L804.5 167.5L807.5 170.5M815.5 164.5L812.5 167.5L815.5 170.5M823.5 164.5L820.5 167.5L823.5 170.5M831.5 164.5L828.5 167.5L831.5 170.5M839.5 164.5L836.5 167.5L839.5 170.5M847.5 164.5L844.5 167.5L847.5 170.5M855.5 164.5L852.5 167.5L855.5 170.5M863.5 164.5L860.5 167.5L863.5 170.5M871.5 164.5L868.5 167.5L871.5 170.5M879.5 164.5L876.5 167.5L879.5 170.5M887.5 164.5L884.5 167.5L887.5 170.5M895.5 164.5L892.5 167.5L895.5 170.5M903.5 164.5L900.5 167.5L903.5 170.5M911.5 164.5L908.5 167.5L911.5 170.5M919.5 164.5L916.5 167.5L919.5 170.5M927.5 164.5L924.5 167.5L927.5 170.5M935.5 164.5L932.5 167.5L935.5 170.5M943.5 164.5L940.5 167.5L943.5 170.5"/>
</g>
<text transform="translate(152 188) scale(0.9346 1)" text-anchor="end" fill="#0c0c78" font-size="13.91" textLength="47.19" lengthAdjust="spacing">PTPRS</text>
<g stroke="#0c0c78" fill="none" stroke-width="1">
<path d="M156 183.5H949"/>
<path d="M159.5 180.5L156.5 183.5L159.5 186.5M167.5 180.5L164.5 183.5L167.5 186.5M175.5 180.5L172.5 183.5L175.5 186.5M183.5 180.5L180.5 183.5L183.5 186.5M191.5 180.5L188.5 183.5L191.5 186.5M199.5 180.5L196.5 183.5L199.5 186.5M207.5 180.5L204.5 183.5L207.5 186.5M215.5 180.5L212.5 183.5L215.5 186.5M223.5 180.5L220.5 183.5L223.5 186.5M231.5 180.5L228.5 183.5L231.5 186.5M239.5 180.5L236.5 183.5L239.5 186.5M247.5 180.5L244.5 183.5L247.5 186.5M255.5 180.5L252.5 183.5L255.5 186.5M263.5 180.5L260.5 183.5L263.5 186.5M271.5 180.5L268.5 183.5L271.5 186.5M279.5 180.5L276.5 183.5L279.5 186.5M287.5 180.5L284.5 183.5L287.5 186.5M295.5 180.5L292.5 183.5L295.5 186.5M303.5 180.5L300.5 183.5L303.5 186.5M311.5 180.5L308.5 183.5L311.5 186.5M319.5 180.5L316.5 183.5L319.5 186.5M327.5 180.5L324.5 183.5L327.5 186.5M335.5 180.5L332.5 183.5L335.5 186.5M343.5 180.5L340.5 183.5L343.5 186.5M351.5 180.5L348.5 183.5L351.5 186.5M359.5 180.5L356.5 183.5L359.5 186.5M367.5 180.5L364.5 183.5L367.5 186.5M375.5 180.5L372.5 183.5L375.5 186.5M383.5 180.5L380.5 183.5L383.5 186.5M391.5 180.5L388.5 183.5L391.5 186.5M399.5 180.5L396.5 183.5L399.5 186.5M407.5 180.5L404.5 183.5L407.5 186.5M415.5 180.5L412.5 183.5L415.5 186.5M423.5 180.5L420.5 183.5L423.5 186.5M431.5 180.5L428.5 183.5L431.5 186.5M439.5 180.5L436.5 183.5L439.5 186.5M447.5 180.5L444.5 183.5L447.5 186.5M455.5 180.5L452.5 183.5L455.5 186.5M463.5 180.5L460.5 183.5L463.5 186.5M471.5 180.5L468.5 183.5L471.5 186.5M479.5 180.5L476.5 183.5L479.5 186.5M487.5 180.5L484.5 183.5L487.5 186.5M495.5 180.5L492.5 183.5L495.5 186.5M503.5 180.5L500.5 183.5L503.5 186.5M511.5 180.5L508.5 183.5L511.5 186.5M519.5 180.5L516.5 183.5L519.5 186.5M527.5 180.5L524.5 183.5L527.5 186.5M535.5 180.5L532.5 183.5L535.5 186.5M543.5 180.5L540.5 183.5L543.5 186.5M551.5 180.5L548.5 183.5L551.5 186.5M559.5 180.5L556.5 183.5L559.5 186.5M567.5 180.5L564.5 183.5L567.5 186.5M575.5 180.5L572.5 183.5L575.5 186.5M583.5 180.5L580.5 183.5L583.5 186.5M591.5 180.5L588.5 183.5L591.5 186.5M599.5 180.5L596.5 183.5L599.5 186.5M607.5 180.5L604.5 183.5L607.5 186.5M615.5 180.5L612.5 183.5L615.5 186.5M623.5 180.5L620.5 183.5L623.5 186.5M631.5 180.5L628.5 183.5L631.5 186.5M639.5 180.5L636.5 183.5L639.5 186.5M647.5 180.5L644.5 183.5L647.5 186.5M655.5 180.5L652.5 183.5L655.5 186.5M663.5 180.5L660.5 183.5L663.5 186.5M671.5 180.5L668.5 183.5L671.5 186.5M679.5 180.5L676.5 183.5L679.5 186.5M687.5 180.5L684.5 183.5L687.5 186.5M695.5 180.5L692.5 183.5L695.5 186.5M703.5 180.5L700.5 183.5L703.5 186.5M711.5 180.5L708.5 183.5L711.5 186.5M719.5 180.5L716.5 183.5L719.5 186.5M727.5 180.5L724.5 183.5L727.5 186.5M735.5 180.5L732.5 183.5L735.5 186.5M743.5 180.5L740.5 183.5L743.5 186.5M751.5 180.5L748.5 183.5L751.5 186.5M759.5 180.5L756.5 183.5L759.5 186.5M767.5 180.5L764.5 183.5L767.5 186.5M775.5 180.5L772.5 183.5L775.5 186.5M783.5 180.5L780.5 183.5L783.5 186.5M791.5 180.5L788.5 183.5L791.5 186.5M799.5 180.5L796.5 183.5L799.5 186.5M807.5 180.5L804.5 183.5L807.5 186.5M815.5 180.5L812.5 183.5L815.5 186.5M823.5 180.5L820.5 183.5L823.5 186.5M831.5 180.5L828.5 183.5L831.5 186.5M839.5 180.5L836.5 183.5L839.5 186.5M847.5 180.5L844.5 183.5L847.5 186.5M855.5 180.5L852.5 183.5L855.5 186.5M863.5 180.5L860.5 183.5L863.5 186.5M871.5 180.5L868.5 183.5L871.5 186.5M879.5 180.5L876.5 183.5L879.5 186.5M887.5 180.5L884.5 183.5L887.5 186.5M895.5 180.5L892.5 183.5L895.5 186.5M903.5 180.5L900.5 183.5L903.5 186.5M911.5 180.5L908.5 183.5L911.5 186.5M919.5 180.5L916.5 183.5L919.5 186.5M927.5 180.5L924.5 183.5L927.5 186.5M935.5 180.5L932.5 183.5L935.5 186.5M943.5 180.5L940.5 183.5L943.5 186.5"/>
</g>
<text x="552.6" y="204" text-anchor="middle" fill="#000" font-size="11" textLength="121.6" lengthAdjust="spacing">RefSeq genes from NCBI</text>
<text transform="translate(152 219) scale(0.9346 1)" text-anchor="end" fill="#0c0c78" font-size="13.91" textLength="97.8" lengthAdjust="spacing">RefSeq Curated</text>
<rect x="157" y="214" width="792" height="1" fill="#0c0c78"/>
<text x="552.5" y="235" text-anchor="middle" fill="#000" font-size="11" textLength="213.4" lengthAdjust="spacing">Publications: Sequences in Scientific Articles</text>
<text transform="translate(152 250) scale(0.9346 1)" text-anchor="end" fill="#000" font-size="13.91">Sequences</text>
<text transform="translate(152 266) scale(0.9346 1)" text-anchor="end" fill="#000" font-size="13.91">SNPs</text>
<rect x="157" y="245" width="792" height="1" fill="#000"/>
<text transform="translate(552.5 283) scale(0.9346 1)" text-anchor="middle" fill="#0a5a0a" font-size="13.91" textLength="394.51" lengthAdjust="spacing">OMIM Gene Phenotypes - Dark Green Can Be Disease-causing</text>
<text transform="translate(152 297) scale(0.9346 1)" text-anchor="end" fill="#0a5a0a" font-size="13.91">OMIM Genes</text>
<rect x="156" y="285" width="793" height="15" fill="#bebebe"/>
<text x="552" y="313" text-anchor="middle" fill="#000" font-size="11" textLength="231.4" lengthAdjust="spacing">Short Genetic Variants from dbSNP release 155</text>
<text transform="translate(152 328) scale(0.9346 1)" text-anchor="end" fill="#000" font-size="13.91" textLength="134.39" lengthAdjust="spacing">Common dbSNP(155)</text>
<text transform="translate(551.9 345) scale(0.9346 1)" text-anchor="middle" fill="#000" font-size="13.91" textLength="611.4" lengthAdjust="spacing">Gene Expression in 54 tissues from GTEx RNA-seq of 17382 samples, 948 donors (V8, Aug 2019)</text>
<text transform="translate(152 384) scale(0.9346 1)" text-anchor="end" fill="#000" font-size="13.91" textLength="47.19" lengthAdjust="spacing">PTPRS</text>
<rect x="155.5" y="348.5" width="378" height="58" fill="#fff" stroke="#f1f1f1" stroke-width="1"/>
<rect x="156" y="354" width="5" height="52" fill="#FFA54F"/>
<rect x="163" y="357" width="5" height="49" fill="#EE9A00"/>
<rect x="170" y="366" width="5" height="40" fill="#8FBC8F"/>
<rect x="177" y="363" width="5" height="43" fill="#8B1C62"/>
<rect x="184" y="357" width="5" height="49" fill="#EE6A50"/>
<rect x="191" y="362" width="5" height="44" fill="#FF0000"/>
<rect x="198" y="356" width="5" height="50" fill="#CDB79E"/>
<rect x="205" y="374" width="5" height="32" fill="#EEEE00"/>
<rect x="212" y="369" width="5" height="37" fill="#EEEE00"/>
<rect x="219" y="374" width="5" height="32" fill="#EEEE00"/>
<rect x="226" y="354" width="5" height="52" fill="#EEEE00"/>
<rect x="233" y="350" width="5" height="56" fill="#EEEE00"/>
<rect x="240" y="362" width="5" height="44" fill="#EEEE00"/>
<rect x="247" y="364" width="5" height="42" fill="#EEEE00"/>
<rect x="254" y="372" width="5" height="34" fill="#EEEE00"/>
<rect x="261" y="369" width="5" height="37" fill="#EEEE00"/>
<rect x="268" y="372" width="5" height="34" fill="#EEEE00"/>
<rect x="275" y="375" width="5" height="31" fill="#EEEE00"/>
<rect x="282" y="373" width="5" height="33" fill="#EEEE00"/>
<rect x="289" y="376" width="5" height="30" fill="#EEEE00"/>
<rect x="296" y="359" width="5" height="47" fill="#00CDCD"/>
<rect x="303" y="393" width="5" height="13" fill="#EE82EE"/>
<rect x="310" y="365" width="5" height="41" fill="#9AC0CD"/>
<rect x="317" y="352" width="5" height="54" fill="#EED5D2"/>
<rect x="324" y="353" width="5" height="53" fill="#EED5D2"/>
<rect x="331" y="361" width="5" height="45" fill="#CDB79E"/>
<rect x="338" y="370" width="5" height="36" fill="#EEC591"/>
<rect x="345" y="360" width="5" height="46" fill="#8B7355"/>
<rect x="352" y="369" width="5" height="37" fill="#8B7355"/>
<rect x="359" y="362" width="5" height="44" fill="#CDAA7D"/>
<rect x="366" y="352" width="5" height="54" fill="#EED5D2"/>
<rect x="373" y="366" width="5" height="40" fill="#B452CD"/>
<rect x="380" y="382" width="5" height="24" fill="#7A378B"/>
<rect x="387" y="381" width="5" height="25" fill="#CDB79E"/>
<rect x="394" y="378" width="5" height="28" fill="#CDB79E"/>
<rect x="401" y="389" width="5" height="17" fill="#CDB79E"/>
<rect x="408" y="360" width="5" height="46" fill="#9ACD32"/>
<rect x="415" y="368" width="5" height="38" fill="#CDB79E"/>
<rect x="422" y="380" width="5" height="26" fill="#7A67EE"/>
<rect x="429" y="348" width="5" height="58" fill="#FFD700"/>
<rect x="436" y="355" width="5" height="51" fill="#FFB6C1"/>
<rect x="443" y="374" width="5" height="32" fill="#CD9B1D"/>
<rect x="450" y="358" width="5" height="48" fill="#B4EEB4"/>
<rect x="457" y="358" width="5" height="48" fill="#D9D9D9"/>
<rect x="464" y="366" width="5" height="40" fill="#3A5FCD"/>
<rect x="471" y="364" width="5" height="42" fill="#1E90FF"/>
<rect x="478" y="372" width="5" height="34" fill="#CDB79E"/>
<rect x="485" y="374" width="5" height="32" fill="#CDB79E"/>
<rect x="492" y="370" width="5" height="36" fill="#FFD39B"/>
<rect x="499" y="369" width="5" height="37" fill="#A6A6A6"/>
<rect x="506" y="357" width="5" height="49" fill="#008B45"/>
<rect x="513" y="356" width="5" height="50" fill="#EED5D2"/>
<rect x="520" y="358" width="5" height="48" fill="#EED5D2"/>
<rect x="527" y="404" width="5" height="2" fill="#FF00FF"/>
<rect x="156" y="407" width="793" height="2" fill="#00007a"/>
<text transform="translate(552 424) scale(0.9346 1)" text-anchor="middle" fill="#000" font-size="13.91" textLength="578.87" lengthAdjust="spacing">H3K27Ac Mark (Often Found Near Active Regulatory Elements) on 7 cell lines from ENCODE</text>
<text transform="translate(13 438) scale(0.9346 1)" text-anchor="start" fill="#000" font-size="13.91">Layered H3K27Ac</text>
<rect x="156" y="455" width="793" height="1" fill="#7a2a62"/>
<text transform="translate(551.6 470) scale(0.9346 1)" text-anchor="middle" fill="#3c3c8c" font-size="13.91" textLength="313.3" lengthAdjust="spacing">100 vertebrates Basewise Conservation by PhyloP</text>
<text x="141.2" y="469" text-anchor="end" fill="#3c3c8c" font-size="13">4.88</text>
<text x="152.6" y="468" text-anchor="end" fill="#3c3c8c" font-size="13">_</text>
<text transform="translate(13 494) scale(0.9346 1)" text-anchor="start" fill="#3c3c8c" font-size="13.91">100 Vert. Cons</text>
<text x="141.2" y="519" text-anchor="end" fill="#8c3c3c" font-size="13">-4.5</text>
<text x="152.6" y="518" text-anchor="end" fill="#8c3c3c" font-size="13">_</text>
<text transform="translate(311.5 498.2) scale(0.6620 0.1802)" x="0" y="0" font-size="100.0" fill="#0000ff">G</text>
<text transform="translate(384 501) scale(0.6491 0.0419)" x="0" y="0" font-size="100.0" fill="#0000ff">G</text>
<text transform="translate(456 506) scale(0.6547 0.1117)" x="0" y="0" font-size="100.0" fill="#00ff00">T</text>
<text transform="translate(456.3 506.5) scale(0.6452 0.0140)" x="0" y="0" font-size="100.0" fill="#0000ff">G</text>
<text transform="translate(599.8 497) scale(0.6440 0.0419)" x="0" y="0" font-size="100.0" fill="#b4aa00">C</text>
<text transform="translate(552.5 536) scale(0.9346 1)" text-anchor="middle" fill="#0c0c78" font-size="13.91" textLength="228.77" lengthAdjust="spacing">Multiz Alignments of 100 Vertebrates</text>
<text transform="translate(152 550) scale(0.9346 1)" text-anchor="end" fill="#e08a10" font-size="13.91">Gaps</text>
<text transform="translate(152 565) scale(0.9346 1)" text-anchor="end" fill="#0c0c78" font-size="13.91">Human</text>
<text transform="translate(190.5 565) scale(0.9346 1)" text-anchor="middle" fill="#0c0c78" font-size="13.91">C</text>
<text transform="translate(262.5 565) scale(0.9346 1)" text-anchor="middle" fill="#0c0c78" font-size="13.91">A</text>
<text transform="translate(334.5 565) scale(0.9346 1)" text-anchor="middle" fill="#0c0c78" font-size="13.91">G</text>
<text transform="translate(406.5 565) scale(0.9346 1)" text-anchor="middle" fill="#0c0c78" font-size="13.91">G</text>
<text transform="translate(478.5 565) scale(0.9346 1)" text-anchor="middle" fill="#0c0c78" font-size="13.91">T</text>
<text transform="translate(550.5 565) scale(0.9346 1)" text-anchor="middle" fill="#0c0c78" font-size="13.91">G</text>
<text transform="translate(622.5 565) scale(0.9346 1)" text-anchor="middle" fill="#0c0c78" font-size="13.91">C</text>
<text transform="translate(694.5 565) scale(0.9346 1)" text-anchor="middle" fill="#0c0c78" font-size="13.91">T</text>
<text transform="translate(766.5 565) scale(0.9346 1)" text-anchor="middle" fill="#0c0c78" font-size="13.91">A</text>
<text transform="translate(838.5 565) scale(0.9346 1)" text-anchor="middle" fill="#0c0c78" font-size="13.91">A</text>
<text transform="translate(910.5 565) scale(0.9346 1)" text-anchor="middle" fill="#0c0c78" font-size="13.91">A</text>
<text transform="translate(152 580) scale(0.9346 1)" text-anchor="end" fill="#0c0c78" font-size="13.91">Rhesus</text>
<text transform="translate(190.5 580) scale(0.9346 1)" text-anchor="middle" fill="#0c0c78" font-size="13.91">C</text>
<text transform="translate(262.5 580) scale(0.9346 1)" text-anchor="middle" fill="#0c0c78" font-size="13.91">A</text>
<text transform="translate(334.5 580) scale(0.9346 1)" text-anchor="middle" fill="#0c0c78" font-size="13.91">G</text>
<text transform="translate(406.5 580) scale(0.9346 1)" text-anchor="middle" fill="#0c0c78" font-size="13.91">G</text>
<text transform="translate(478.5 580) scale(0.9346 1)" text-anchor="middle" fill="#0c0c78" font-size="13.91">T</text>
<text transform="translate(550.5 580) scale(0.9346 1)" text-anchor="middle" fill="#0c0c78" font-size="13.91">G</text>
<text transform="translate(622.5 580) scale(0.9346 1)" text-anchor="middle" fill="#0c0c78" font-size="13.91">C</text>
<text transform="translate(694.5 580) scale(0.9346 1)" text-anchor="middle" fill="#0c0c78" font-size="13.91">T</text>
<text transform="translate(766.5 580) scale(0.9346 1)" text-anchor="middle" fill="#0c0c78" font-size="13.91">A</text>
<text transform="translate(838.5 580) scale(0.9346 1)" text-anchor="middle" fill="#0c0c78" font-size="13.91">A</text>
<text transform="translate(910.5 580) scale(0.9346 1)" text-anchor="middle" fill="#0c0c78" font-size="13.91">A</text>
<text transform="translate(152 595) scale(0.9346 1)" text-anchor="end" fill="#0a5a0a" font-size="13.91">Mouse</text>
<text x="189.7" y="596" text-anchor="middle" fill="#6e6ea4" font-size="13">=</text>
<text x="261.8" y="596" text-anchor="middle" fill="#6e6ea4" font-size="13">=</text>
<text x="333.9" y="596" text-anchor="middle" fill="#6e6ea4" font-size="13">=</text>
<text x="406.0" y="596" text-anchor="middle" fill="#6e6ea4" font-size="13">=</text>
<text x="478.1" y="596" text-anchor="middle" fill="#6e6ea4" font-size="13">=</text>
<text x="550.2" y="596" text-anchor="middle" fill="#6e6ea4" font-size="13">=</text>
<text x="622.3" y="596" text-anchor="middle" fill="#6e6ea4" font-size="13">=</text>
<text x="694.4" y="596" text-anchor="middle" fill="#6e6ea4" font-size="13">=</text>
<text x="766.5" y="596" text-anchor="middle" fill="#6e6ea4" font-size="13">=</text>
<text x="838.6" y="596" text-anchor="middle" fill="#6e6ea4" font-size="13">=</text>
<text x="910.7" y="596" text-anchor="middle" fill="#6e6ea4" font-size="13">=</text>
<text transform="translate(152 610) scale(0.9346 1)" text-anchor="end" fill="#0c0c78" font-size="13.91">Dog</text>
<text x="189.7" y="611" text-anchor="middle" fill="#6e6ea4" font-size="13">=</text>
<text x="261.8" y="611" text-anchor="middle" fill="#6e6ea4" font-size="13">=</text>
<text transform="translate(334.5 610) scale(0.9346 1)" text-anchor="middle" fill="#0c0c78" font-size="13.91">G</text>
<text transform="translate(406.5 610) scale(0.9346 1)" text-anchor="middle" fill="#0c0c78" font-size="13.91">G</text>
<text transform="translate(478.5 610) scale(0.9346 1)" text-anchor="middle" fill="#0c0c78" font-size="13.91">T</text>
<text transform="translate(550.5 610) scale(0.9346 1)" text-anchor="middle" fill="#8c8cb4" font-size="13.91">A</text>
<text transform="translate(622.5 610) scale(0.9346 1)" text-anchor="middle" fill="#0c0c78" font-size="13.91">C</text>
<text transform="translate(694.5 610) scale(0.9346 1)" text-anchor="middle" fill="#0c0c78" font-size="13.91">T</text>
<text transform="translate(766.5 610) scale(0.9346 1)" text-anchor="middle" fill="#8c8cb4" font-size="13.91">C</text>
<text transform="translate(838.5 610) scale(0.9346 1)" text-anchor="middle" fill="#0c0c78" font-size="13.91">A</text>
<text transform="translate(910.5 610) scale(0.9346 1)" text-anchor="middle" fill="#8c8cb4" font-size="13.91">G</text>
<text transform="translate(152 625) scale(0.9346 1)" text-anchor="end" fill="#0a5a0a" font-size="13.91">Elephant</text>
<text x="190.5" y="625" text-anchor="middle" fill="#6e6ea4" font-size="13">-</text>
<text x="262.5" y="625" text-anchor="middle" fill="#6e6ea4" font-size="13">-</text>
<text transform="translate(334.5 625) scale(0.9346 1)" text-anchor="middle" fill="#0c0c78" font-size="13.91">G</text>
<text transform="translate(406.5 625) scale(0.9346 1)" text-anchor="middle" fill="#0c0c78" font-size="13.91">G</text>
<text transform="translate(478.5 625) scale(0.9346 1)" text-anchor="middle" fill="#0c0c78" font-size="13.91">T</text>
<text transform="translate(550.5 625) scale(0.9346 1)" text-anchor="middle" fill="#0c0c78" font-size="13.91">G</text>
<text transform="translate(622.5 625) scale(0.9346 1)" text-anchor="middle" fill="#0c0c78" font-size="13.91">C</text>
<text transform="translate(694.5 625) scale(0.9346 1)" text-anchor="middle" fill="#0c0c78" font-size="13.91">T</text>
<text transform="translate(766.5 625) scale(0.9346 1)" text-anchor="middle" fill="#8c8cb4" font-size="13.91">C</text>
<text transform="translate(838.5 625) scale(0.9346 1)" text-anchor="middle" fill="#0c0c78" font-size="13.91">A</text>
<text transform="translate(910.5 625) scale(0.9346 1)" text-anchor="middle" fill="#8c8cb4" font-size="13.91">G</text>
<text transform="translate(152 640) scale(0.9346 1)" text-anchor="end" fill="#0a5a0a" font-size="13.91">Chicken</text>
<text x="189.7" y="641" text-anchor="middle" fill="#6e6ea4" font-size="13">=</text>
<text x="261.8" y="641" text-anchor="middle" fill="#6e6ea4" font-size="13">=</text>
<text x="333.9" y="641" text-anchor="middle" fill="#6e6ea4" font-size="13">=</text>
<text x="406.0" y="641" text-anchor="middle" fill="#6e6ea4" font-size="13">=</text>
<text x="478.1" y="641" text-anchor="middle" fill="#6e6ea4" font-size="13">=</text>
<text x="550.2" y="641" text-anchor="middle" fill="#6e6ea4" font-size="13">=</text>
<text x="622.3" y="641" text-anchor="middle" fill="#6e6ea4" font-size="13">=</text>
<text x="694.4" y="641" text-anchor="middle" fill="#6e6ea4" font-size="13">=</text>
<text x="766.5" y="641" text-anchor="middle" fill="#6e6ea4" font-size="13">=</text>
<text x="838.6" y="641" text-anchor="middle" fill="#6e6ea4" font-size="13">=</text>
<text x="910.7" y="641" text-anchor="middle" fill="#6e6ea4" font-size="13">=</text>
<text transform="translate(152 655) scale(0.9346 1)" text-anchor="end" fill="#0c0c78" font-size="13.91">X_tropicalis</text>
<text x="189.7" y="656" text-anchor="middle" fill="#6e6ea4" font-size="13">=</text>
<text x="261.8" y="656" text-anchor="middle" fill="#6e6ea4" font-size="13">=</text>
<text x="333.9" y="656" text-anchor="middle" fill="#6e6ea4" font-size="13">=</text>
<text x="406.0" y="656" text-anchor="middle" fill="#6e6ea4" font-size="13">=</text>
<text x="478.1" y="656" text-anchor="middle" fill="#6e6ea4" font-size="13">=</text>
<text x="550.2" y="656" text-anchor="middle" fill="#6e6ea4" font-size="13">=</text>
<text x="622.3" y="656" text-anchor="middle" fill="#6e6ea4" font-size="13">=</text>
<text x="694.4" y="656" text-anchor="middle" fill="#6e6ea4" font-size="13">=</text>
<text x="766.5" y="656" text-anchor="middle" fill="#6e6ea4" font-size="13">=</text>
<text x="838.6" y="656" text-anchor="middle" fill="#6e6ea4" font-size="13">=</text>
<text x="910.7" y="656" text-anchor="middle" fill="#6e6ea4" font-size="13">=</text>
<text transform="translate(152 670) scale(0.9346 1)" text-anchor="end" fill="#0a5a0a" font-size="13.91">Zebrafish</text>
<text x="189.7" y="671" text-anchor="middle" fill="#6e6ea4" font-size="13">=</text>
<text x="261.8" y="671" text-anchor="middle" fill="#6e6ea4" font-size="13">=</text>
<text x="333.9" y="671" text-anchor="middle" fill="#6e6ea4" font-size="13">=</text>
<text x="406.0" y="671" text-anchor="middle" fill="#6e6ea4" font-size="13">=</text>
<text x="478.1" y="671" text-anchor="middle" fill="#6e6ea4" font-size="13">=</text>
<text x="550.2" y="671" text-anchor="middle" fill="#6e6ea4" font-size="13">=</text>
<text x="622.3" y="671" text-anchor="middle" fill="#6e6ea4" font-size="13">=</text>
<text x="694.4" y="671" text-anchor="middle" fill="#6e6ea4" font-size="13">=</text>
<text x="766.5" y="671" text-anchor="middle" fill="#6e6ea4" font-size="13">=</text>
<text x="838.6" y="671" text-anchor="middle" fill="#6e6ea4" font-size="13">=</text>
<text x="910.7" y="671" text-anchor="middle" fill="#6e6ea4" font-size="13">=</text>
<rect x="300" y="612" width="1" height="14" fill="#e08a10"/>
<text transform="translate(552.8 686) scale(0.9346 1)" text-anchor="middle" fill="#000" font-size="13.91" textLength="237.86" lengthAdjust="spacing">Repeating Elements by RepeatMasker</text>
<text transform="translate(152 700) scale(0.9346 1)" text-anchor="end" fill="#000" font-size="13.91">RepeatMasker</text>
</svg>
</body></html>
